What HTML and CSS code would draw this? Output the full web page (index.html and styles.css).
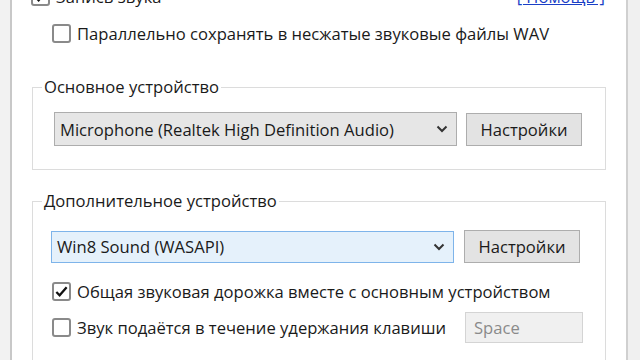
FILE: index.html
```html
<!DOCTYPE html>
<html lang="ru">
<head>
<meta charset="utf-8">
<link rel="stylesheet" href="styles.css">
</head>
<body>
<div class="window">
  <div class="side-left"></div>
  <div class="main">
    <div class="top-row">
      <label class="check">
        <span class="box"><svg viewBox="0 0 16 16" width="15" height="15"><path d="M2.5 8.5 L6 12 L13.5 3.5" fill="none" stroke="#111" stroke-width="2.4"/></svg></span>
        <span class="label">Запись звука</span>
      </label>
      <a class="help" href="#">[ Помощь ]</a>
    </div>
    <label class="check sub">
      <span class="box"></span>
      <span class="label">Параллельно сохранять в несжатые звуковые файлы WAV</span>
    </label>

    <fieldset class="group g1">
      <legend>Основное устройство</legend>
      <div class="device-row">
        <div class="select grey">
          <span>Microphone (Realtek High Definition Audio)</span>
          <svg class="arrow" viewBox="0 0 12 8" width="12" height="8"><path d="M1.5 1.5 L6 6 L10.5 1.5" fill="none" stroke="#333" stroke-width="2"/></svg>
        </div>
        <button class="btn">Настройки</button>
      </div>
    </fieldset>

    <fieldset class="group g2">
      <legend>Дополнительное устройство</legend>
      <div class="device-row">
        <div class="select blue">
          <span>Win8 Sound (WASAPI)</span>
          <svg class="arrow" viewBox="0 0 12 8" width="12" height="8"><path d="M1.5 1.5 L6 6 L10.5 1.5" fill="none" stroke="#333" stroke-width="2"/></svg>
        </div>
        <button class="btn">Настройки</button>
      </div>
      <label class="check opt1">
        <span class="box"><svg viewBox="0 0 16 16" width="15" height="15"><path d="M2.5 8.5 L6 12 L13.5 3.5" fill="none" stroke="#111" stroke-width="2.4"/></svg></span>
        <span class="label">Общая звуковая дорожка вместе с основным устройством</span>
      </label>
      <div class="key-row">
        <label class="check">
          <span class="box"></span>
          <span class="label">Звук подаётся в течение удержания клавиши</span>
        </label>
        <div class="keyfield">Space</div>
      </div>
    </fieldset>
  </div>
  <div class="side-right"></div>
</div>
</body>
</html>
```

FILE: styles.css
```css
* { box-sizing: border-box; }
html, body {
  margin: 0;
  padding: 0;
  width: 640px;
  height: 360px;
  overflow: hidden;
  background: #ffffff;
}
body {
  font-family: "Open Sans", "DejaVu Sans", sans-serif;
  font-size: 16.6px;
  color: #1a1a1a;
}
.window {
  display: flex;
  width: 640px;
  height: 360px;
}
.side-left {
  width: 12px;
  flex: none;
  background: #f2f2f2;
  border-right: 2px solid #c8c8c8;
}
.side-right {
  width: 14px;
  flex: none;
  background: #f0f0f0;
  border-left: 2px solid #d0d0d0;
}
.main {
  flex: 1;
  padding: 0 20px;
  background: #ffffff;
}
.top-row {
  display: flex;
  align-items: center;
  justify-content: space-between;
  height: 19px;
  margin-top: -13px;
}
.top-row .check { margin-left: -1px; }
.check {
  display: flex;
  align-items: center;
  height: 19px;
  white-space: nowrap;
}
.box {
  width: 19px;
  height: 19px;
  flex: none;
  border: 2px solid #8a8a8a;
  border-radius: 3px;
  background: #fff;
  display: flex;
  align-items: center;
  justify-content: center;
}
.label {
  margin-left: 6px;
  line-height: 19px;
}
.help {
  color: #1a3fc6;
  text-decoration: underline;
  margin-right: 1px;
  line-height: 19px;
}
.sub {
  margin-top: 18px;
  margin-left: 20px;
}
.group {
  margin: 0;
  border: 1px solid #dcdcdc;
  padding: 0;
  min-width: 0;
}
.group legend {
  padding: 0 2px;
  line-height: 20px;
  height: 20px;
}
.g1 {
  margin-top: 34px;
  padding: 15px 20px 23px 21px;
}
.g2 {
  margin-top: 21px;
  padding: 19px 20px 30px 18px;
}
.g1 legend { margin-left: -12px; }
.g2 legend { margin-left: -9px; }
.device-row {
  display: flex;
  align-items: center;
  gap: 9px;
}
.select {
  width: 403px;
  height: 34px;
  border: 1px solid #adadad;
  display: flex;
  align-items: center;
  justify-content: space-between;
  padding: 0 8px 0 5px;
  white-space: nowrap;
}
.select.grey { background: #e6e6e6; }
.select.blue {
  height: 32px;
  background: #e5f1fb;
  border-color: #7eb4ea;
}
.btn {
  width: 116px;
  height: 33px;
  font: inherit;
  color: #1a1a1a;
  background: #e3e3e3;
  border: 1px solid #adadad;
  padding: 0;
}
.g2 .btn { margin-left: 1px; }
.opt1 {
  margin-top: 19px;
  margin-left: 1px;
}
.key-row {
  display: flex;
  align-items: center;
  margin-top: 11px;
}
.key-row .check {
  width: 413px;
  margin-left: 1px;
}
.keyfield {
  width: 118px;
  height: 31px;
  background: #f0f0f0;
  border: 1px solid #d4d4d4;
  color: #8a8a8a;
  padding-left: 8px;
  line-height: 29px;
}
```
